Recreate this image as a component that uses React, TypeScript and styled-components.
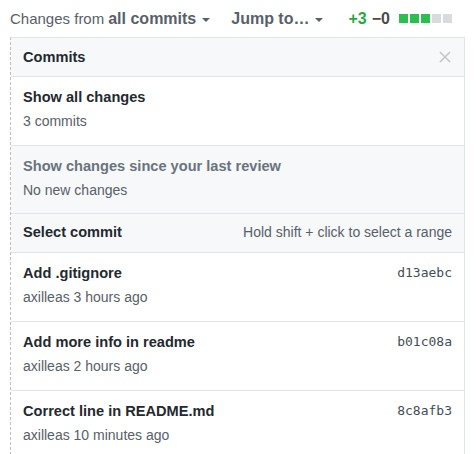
import React from "react";
import styled, { createGlobalStyle } from "styled-components";

const Global = createGlobalStyle`
  html, body { margin: 0; padding: 0; background: #fff; }
  body { font-family: "Liberation Sans", Arial, sans-serif; color: #24292e; }
`;

const Page = styled.div`
  width: 476px;
  height: 454px;
  overflow: hidden;
  padding-left: 10px;
  box-sizing: border-box;
`;

const Toolbar = styled.div`
  display: flex;
  align-items: center;
  height: 37px;
  font-size: 15px;
  color: #586069;
`;

const Menu = styled.div<{ $ml?: number }>`
  display: flex;
  align-items: center;
  margin-left: ${(p) => p.$ml ?? 0}px;
  white-space: nowrap;
`;

const Strong = styled.strong`
  font-weight: bold;
  font-size: 16px;
  margin-left: 4px;
`;

const JumpLabel = styled.strong`
  font-weight: bold;
  font-size: 16px;
`;

const Caret = styled.span`
  display: inline-block;
  width: 0;
  height: 0;
  margin-left: 6px;
  margin-top: 2px;
  border-top: 4px solid #586069;
  border-left: 4px solid transparent;
  border-right: 4px solid transparent;
`;

const Stat = styled.div`
  display: flex;
  align-items: center;
  margin-left: 25px;
  font-weight: bold;
  font-size: 16px;
`;

const Added = styled.span`
  color: #28a745;
`;

const Removed = styled.span`
  color: #4a4a4a;
  margin-left: 5px;
`;

const Blocks = styled.span`
  display: flex;
  gap: 2px;
  margin-left: 9px;
`;

const Block = styled.span<{ $on: boolean }>`
  width: 9px;
  height: 9px;
  background: ${(p) => (p.$on ? "#2cbe4e" : "#d9dcdf")};
`;

const Panel = styled.div`
  width: 455px;
  box-sizing: border-box;
  border-top: 1px solid #e1e4e8;
  border-right: 1px solid #e1e4e8;
  border-left: 1px dashed #bdbdbd;
  background: #fff;
`;

const Header = styled.div<{ $pt?: number; $pb?: number }>`
  display: flex;
  align-items: center;
  justify-content: space-between;
  padding: ${(p) => p.$pt ?? 9}px 12px ${(p) => p.$pb ?? 9}px 12px;
  line-height: 20px;
  background: #f6f8fa;
  border-bottom: 1px solid #e1e4e8;
  font-size: 14.6px;
  font-weight: bold;
  color: #24292e;
`;

const Hint = styled.span`
  font-weight: normal;
  font-size: 14px;
  color: #586069;
`;

const Close = styled.svg`
  width: 12px;
  height: 12px;
  margin-right: 1px;
`;

const Item = styled.div<{ $disabled?: boolean; $pb?: number }>`
  display: flex;
  justify-content: space-between;
  align-items: flex-start;
  padding: 10px 12px ${(p) => p.$pb ?? 14}px 12px;
  border-bottom: 1px solid #e1e4e8;
  background: ${(p) => (p.$disabled ? "#f6f8fa" : "#fff")};
`;

const ItemText = styled.div`
  display: flex;
  flex-direction: column;
  gap: 4px;
`;

const Title = styled.div<{ $disabled?: boolean }>`
  font-size: 14.6px;
  line-height: 20px;
  font-weight: bold;
  color: ${(p) => (p.$disabled ? "#6a737d" : "#24292e")};
`;

const Sub = styled.div`
  font-size: 14px;
  line-height: 20px;
  color: #586069;
`;

const Sha = styled.code`
  font-family: "DejaVu Sans Mono", "Liberation Mono", monospace;
  font-size: 13px;
  line-height: 20px;
  color: #444d56;
`;

const commits = [
  { title: "Add .gitignore", meta: "axilleas 3 hours ago", sha: "d13aebc" },
  { title: "Add more info in readme", meta: "axilleas 2 hours ago", sha: "b01c08a" },
  { title: "Correct line in README.md", meta: "axilleas 10 minutes ago", sha: "8c8afb3" },
];

export default function App() {
  return (
    <>
      <Global />
      <Page>
        <Toolbar>
          <Menu>
            Changes from<Strong>all commits</Strong>
            <Caret />
          </Menu>
          <Menu $ml={21}>
            <JumpLabel>Jump to…</JumpLabel>
            <Caret />
          </Menu>
          <Stat>
            <Added>+3</Added>
            <Removed>−0</Removed>
            <Blocks>
              {[true, true, true, false, false].map((on, i) => (
                <Block key={i} $on={on} />
              ))}
            </Blocks>
          </Stat>
        </Toolbar>
        <Panel>
          <Header>
            <span>Commits</span>
            <Close viewBox="0 0 12 12">
              <path d="M1 1 L11 11 M11 1 L1 11" stroke="#c4c7ca" strokeWidth="1.6" fill="none" />
            </Close>
          </Header>
          <Item>
            <ItemText>
              <Title>Show all changes</Title>
              <Sub>3 commits</Sub>
            </ItemText>
          </Item>
          <Item $disabled $pb={13}>
            <ItemText>
              <Title $disabled>Show changes since your last review</Title>
              <Sub>No new changes</Sub>
            </ItemText>
          </Item>
          <Header $pt={8} $pb={10}>
            <span>Select commit</span>
            <Hint>Hold shift + click to select a range</Hint>
          </Header>
          {commits.map((c) => (
            <Item key={c.sha}>
              <ItemText>
                <Title>{c.title}</Title>
                <Sub>{c.meta}</Sub>
              </ItemText>
              <Sha>{c.sha}</Sha>
            </Item>
          ))}
        </Panel>
      </Page>
    </>
  );
}
